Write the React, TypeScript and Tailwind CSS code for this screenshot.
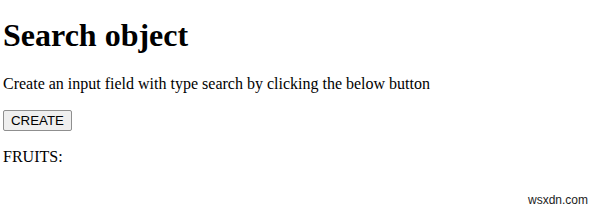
import React from 'react';

const App: React.FC = () => {
  return (
    <div className="relative w-[600px] h-[213px] bg-white text-black overflow-hidden font-['Liberation_Serif',serif]">
      <div className="pl-[3px] pt-[17px]">
        <h1 className="text-[32px] font-bold leading-[36px]">Search object</h1>
        <p className="mt-[22px] text-[16px] leading-[18px]">
          Create an input field with type search by clicking the below button
        </p>
        <button className="mt-[17px] h-[21px] w-[69px] bg-[#efefef] border border-[#8f8f8f] rounded-[2px] text-[13.3px] font-['Liberation_Sans',sans-serif] text-black leading-none">
          CREATE
        </button>
        <p className="mt-[16px] text-[16px] leading-[18px]">FRUITS:</p>
      </div>
      <div className="absolute right-[12px] bottom-[4px] text-[12px] text-[#222] font-['Liberation_Sans',sans-serif]">
        wsxdn.com
      </div>
    </div>
  );
};

export default App;
